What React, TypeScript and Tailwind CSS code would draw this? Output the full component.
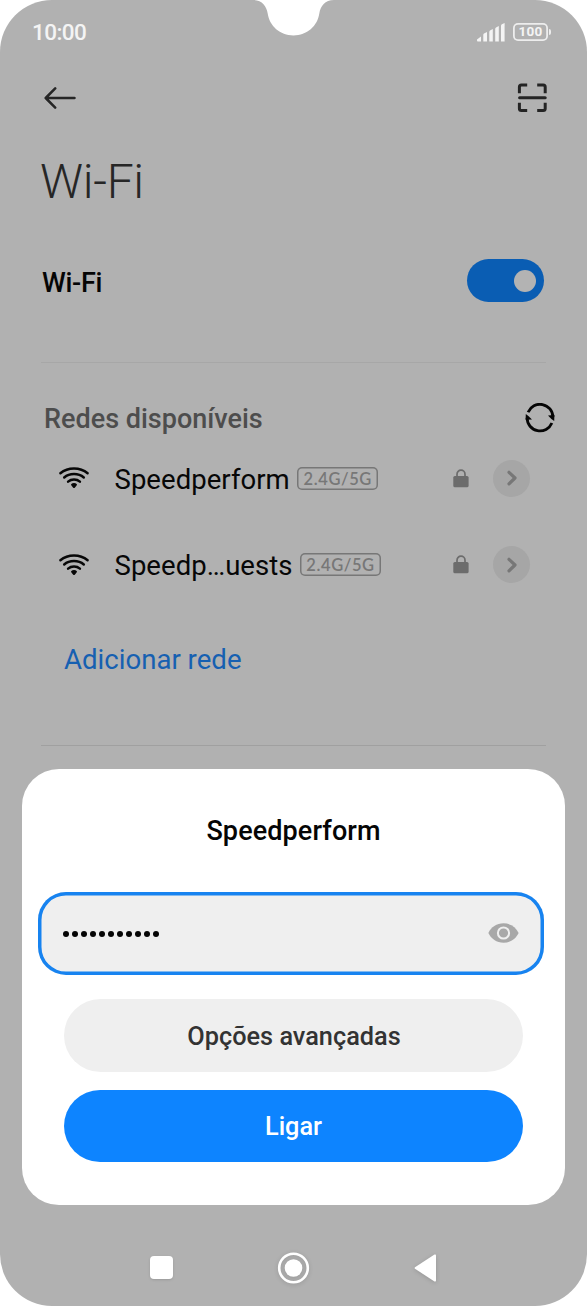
import React from "react";

const font = "font-['Roboto',sans-serif]";

function SignalIcon() {
  return (
    <svg width="28" height="19" viewBox="0 0 28 19" fill="#f4f4f4" className="mt-[22.5px]">
      <path d="M0 16.5 L4 13.5 V18.5 H0.8 Q0 18.5 0 17.6Z" />
      <path d="M6.3 11.8 Q6.3 11 7 10.5 L10 9 V18.5 H6.3Z" />
      <path d="M12.3 9 Q12.3 8 13 7.5 L15.8 6 V18.5 H12.3Z" />
      <path d="M18.2 6 Q18.2 5 19 4.4 L21.8 3 V18.5 H18.2Z" />
      <path d="M24 3 Q24 2 24.8 1.3 L27.6 0 V18.5 H24Z" />
    </svg>
  );
}

function BackIcon() {
  return (
    <svg width="32" height="24" viewBox="0 0 32 24" fill="none" stroke="#262626" strokeWidth="2.5" strokeLinecap="round" strokeLinejoin="round">
      <path d="M30.5 12H2M11.2 2.4L1.7 12l9.5 9.6" />
    </svg>
  );
}

function ScanIcon() {
  return (
    <svg width="30" height="30" viewBox="0 0 30 30" fill="none" stroke="#242424" strokeWidth="3">
      <path d="M2.4 10.2V4Q2.4 2 4.4 2H10.2M20.2 2h6Q28.2 2 28.2 4v6.2M28.2 19.8V25.6Q28.2 27.6 26.2 27.6H20.2M10.2 27.6H4.4Q2.4 27.6 2.4 25.6V19.8" />
      <path d="M2.6 14.8H28.2" strokeLinecap="round" />
    </svg>
  );
}

function RefreshIcon() {
  return (
    <svg width="30" height="30" viewBox="0 0 30 30" fill="none" stroke="#050505" strokeWidth="2.8" className="-mt-px">
      <path d="M3.1 9.2A12.9 12.9 0 0 1 27.9 14.1" />
      <path d="M26.9 20A12.9 12.9 0 0 1 2.1 15.1" />
      <path d="M23 12.4L29.4 12L29.2 18L26.4 16Z" fill="#050505" stroke="none" />
      <path d="M7 16.4L0.6 16.8L0.8 11L3.6 13.2Z" fill="#050505" stroke="none" />
    </svg>
  );
}

function WifiIcon() {
  return (
    <svg width="32" height="24" viewBox="0 0 32 24" fill="none" stroke="#070707" strokeWidth="2.5" strokeLinecap="round">
      <path d="M2.4 7.2C10 0.8 22 0.8 29.6 7.2" />
      <path d="M6.2 11.5C11.5 6.9 20.5 6.9 25.8 11.5" />
      <path d="M10.1 15.6C13.4 12.7 18.6 12.7 21.9 15.6" />
      <path d="M13 18.2Q16 16 19 18.2Q19.2 19.2 17 21.4Q16 22.4 15 21.4Q12.8 19.2 13 18.2Z" fill="#070707" stroke="none" />
    </svg>
  );
}

function LockIcon() {
  return (
    <svg width="16" height="19" viewBox="0 0 16 19">
      <path d="M4 8V5.2a4 4 0 0 1 8 0V8" fill="none" stroke="#6c6c6c" strokeWidth="1.7" />
      <rect x="0.3" y="7" width="15.3" height="11.3" rx="1.6" fill="#6c6c6c" />
    </svg>
  );
}

function NetworkRow({ name }: { name: string }) {
  return (
    <div className="flex h-[86.5px] items-center pr-[57.5px] pl-[58px]">
      <WifiIcon />
      <span className="ml-[24.5px] pt-[3px] text-[27.5px] leading-8 tracking-[0.05px] whitespace-nowrap text-[#070707]">{name}</span>
      <span className="ml-[7.5px] flex h-[23px] w-[81px] items-center justify-center rounded-[5px] pt-px font-['Lato',sans-serif] text-[16.5px] leading-none font-semibold tracking-[0.6px] whitespace-nowrap text-[#777] shadow-[inset_0_0_0_1.5px_#777]">
        2.4G/5G
      </span>
      <div className="ml-auto flex items-center gap-[24px]">
        <LockIcon />
        <span className="flex h-[37px] w-[37px] items-center justify-center rounded-full bg-[#a6a6a6] pl-px">
          <svg width="12" height="16" viewBox="0 0 12 16" fill="none" stroke="#777" strokeWidth="3.2" strokeLinecap="round" strokeLinejoin="round">
            <path d="M3 2.3L9 8l-6 5.8" />
          </svg>
        </span>
      </div>
    </div>
  );
}

function PasswordSheet() {
  return (
    <section className="absolute top-[769px] left-[22px] flex h-[435.5px] w-[543px] flex-col items-center rounded-[37px] bg-white">
      <h2 className="mt-[46px] text-[27px] leading-8 font-medium tracking-[0.1px] whitespace-nowrap text-[#050505]">Speedperform</h2>
      <div className="mt-[44.5px] mr-[5px] flex h-[83px] w-[505.5px] items-center justify-between rounded-[28px] bg-[#efefef] pr-[25px] pl-[25px] shadow-[inset_0_0_0_3.5px_#1783f0]">
        <div className="flex gap-[3px] pt-px">
          {Array.from({ length: 11 }, (_, i) => (
            <span key={i} className="h-[6px] w-[6px] rounded-full bg-[#050505]" />
          ))}
        </div>
        <svg width="31" height="20" viewBox="0 0 31 20">
          <path d="M0.4 10C3 4.2 8.7 0.3 15.5 0.3S28 4.2 30.6 10C28 15.8 22.3 19.7 15.5 19.7S3 15.8 0.4 10Z" fill="#a8a8a8" />
          <circle cx="15.5" cy="10" r="5.6" fill="#a8a8a8" stroke="#efefef" strokeWidth="2" />
        </svg>
      </div>
      <button className="mt-[24.5px] h-[72.5px] w-[459.5px] rounded-full bg-[#efefef] pt-[3px] pl-px text-[25.3px] font-medium whitespace-nowrap text-[#333]">Opções avançadas</button>
      <button className="mt-[18px] h-[72.5px] w-[459.5px] rounded-full bg-[#0d84ff] pt-[3px] text-[25.3px] font-medium text-white">Ligar</button>
    </section>
  );
}

export default function App() {
  return (
    <main className="h-[1306px] w-[587px] overflow-hidden bg-white">
      <div className={`relative flex h-full w-full flex-col overflow-hidden rounded-[52px] bg-[#b1b1b1] ${font}`}>
        <svg width="90" height="36" viewBox="0 0 90 36" className="absolute top-0 left-[249px]" fill="#fff">
          <path d="M4 0C13 0 17.5 6 18.7 13.5C20.5 26 31 35.4 44.5 35.4S68.5 26 70.3 13.5C71.5 6 76 0 85 0Z" />
        </svg>
        <header className="flex h-[64px] items-start pr-[36px] pl-[32px]">
          <span className="mt-[20px] text-[22.5px] leading-6 font-medium tracking-[-0.6px] text-[#f4f4f4]">10:00</span>
          <div className="ml-auto flex items-start">
            <SignalIcon />
            <div className="mt-[23px] ml-[8px] flex items-center gap-px">
              <span className="flex h-[17.5px] w-[35px] items-center justify-center rounded-[5px] text-[13.5px] leading-none font-bold tracking-[0.2px] text-[#f4f4f4] shadow-[inset_0_0_0_1.8px_#ededed]">100</span>
              <span className="h-[6px] w-[2px] rounded-r-full bg-[#ededed]" />
            </div>
          </div>
        </header>
        <nav className="flex h-[68px] items-center justify-between pr-[40px] pl-[44px]">
          <BackIcon />
          <ScanIcon />
        </nav>
        <h1 className="mt-[20px] h-[58px] pl-[40px] text-[48px] leading-[60px] font-light tracking-[-0.3px] text-[#262626]">Wi-Fi</h1>
        <div className="mt-[41px] flex h-[59px] items-center justify-between pr-[43px] pl-[42px]">
          <span className="pt-[4px] text-[27px] leading-8 font-medium tracking-[-0.3px] text-[#050505]">Wi-Fi</span>
          <span className="flex h-[42.5px] w-[77px] items-center justify-end rounded-full bg-[#0a5db3] pr-2">
            <span className="h-[22px] w-[22px] rounded-full bg-[#b3b3b3]" />
          </span>
        </div>
        <hr className="mt-[52px] mr-[41px] ml-[41px] border-[#a7a7a7]" />
        <div className="mt-[38px] flex h-[34px] items-center justify-between pr-[32px] pl-[44px]">
          <h2 className="pt-[2px] text-[27px] leading-8 font-medium whitespace-nowrap text-[#4d4d4d]">Redes disponíveis</h2>
          <RefreshIcon />
        </div>
        <div className="flex flex-col">
          <NetworkRow name="Speedperform" />
          <NetworkRow name="Speedp…uests" />
        </div>
        <a className="mt-[36px] ml-[64px] text-[27.6px] leading-8 whitespace-nowrap text-[#1660b1]">Adicionar rede</a>
        <hr className="mt-[69px] mr-[41px] ml-[41px] border-[#a0a0a0]" />
        <footer className="mt-auto flex h-[77px] items-center justify-between pr-[149px] pl-[150px]">
          <span className="h-[23px] w-[23px] rounded-[4px] bg-white shadow-sm" />
          <svg width="34" height="34" viewBox="0 0 34 34" className="drop-shadow-sm">
            <circle cx="16.5" cy="17" r="14.3" fill="none" stroke="#fff" strokeWidth="2.6" />
            <circle cx="16.5" cy="17" r="8.8" fill="#fff" />
          </svg>
          <svg width="24" height="30" viewBox="0 0 24 30" className="drop-shadow-sm" fill="#fff">
            <path d="M1 14.2Q0.2 15 1 15.8L20.5 28.4Q22 29.1 22 27.6V2.4Q22 .9 20.5 1.6Z" />
          </svg>
        </footer>
        <PasswordSheet />
      </div>
    </main>
  );
}
